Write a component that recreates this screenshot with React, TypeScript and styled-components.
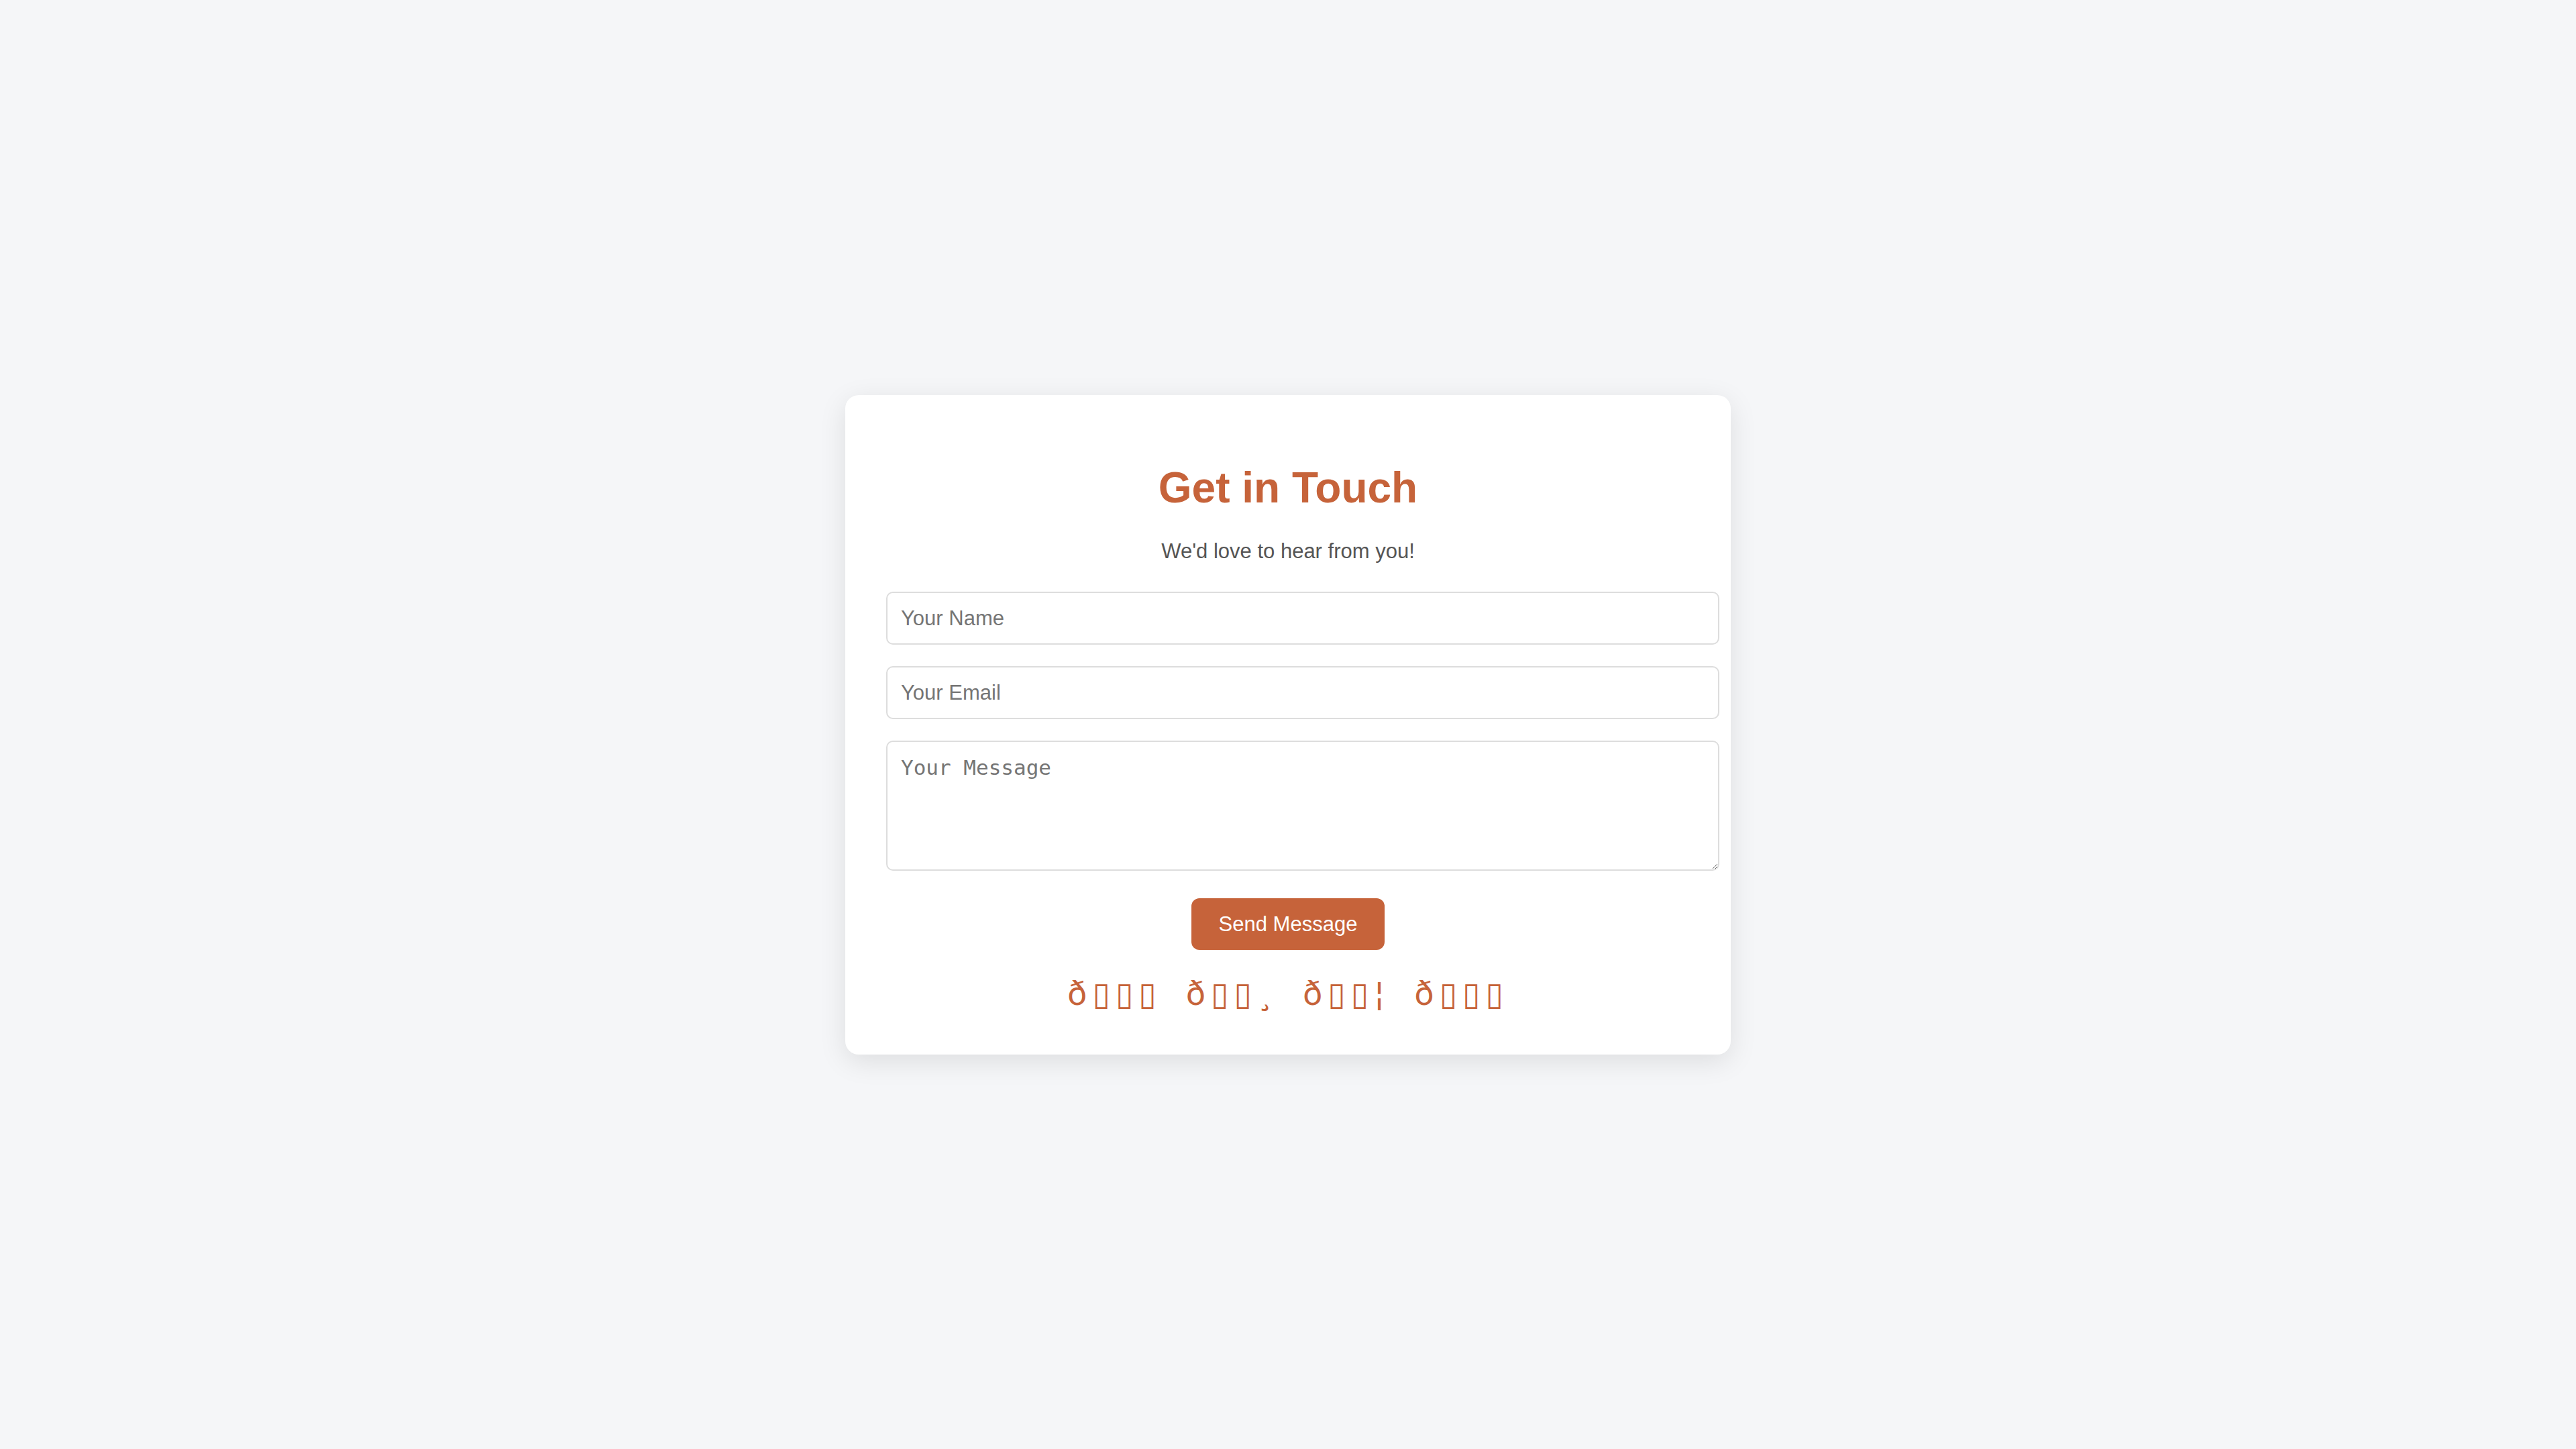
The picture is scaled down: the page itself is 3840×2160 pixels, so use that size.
import styled, { createGlobalStyle } from 'styled-components'

const GlobalStyle = createGlobalStyle`
  html,
  body {
    margin: 0;
    padding: 0;
    background: #f5f6f8;
    font-family: 'Liberation Sans', Arial, Helvetica, sans-serif;
  }
`

const Page = styled.main`
  min-height: 100vh;
  display: flex;
  align-items: center;
  justify-content: center;
`

const Card = styled.section`
  width: 1198px;
  padding: 61px 61px 63px;
  background: #ffffff;
  border-radius: 20px;
  box-shadow: 0 10px 40px rgba(0, 0, 0, 0.1);
  text-align: center;
`

const Title = styled.h2`
  margin: 40px 0 0;
  font-size: 64px;
  line-height: 74px;
  font-weight: bold;
  color: #c6633a;
`

const Subtitle = styled.p`
  margin: 40px 0 0;
  font-size: 31px;
  line-height: 36px;
  color: #555555;
`

const Form = styled.form`
  margin-top: 42px;
  display: flex;
  flex-direction: column;
  gap: 32px;
`

const Field = styled.input`
  display: block;
  width: 100%;
  height: 35px;
  box-sizing: content-box;
  padding: 20px;
  border: 2px solid #dddddd;
  border-radius: 10px;
  font-family: 'Liberation Sans', Arial, sans-serif;
  font-size: 31px;
  line-height: 35px;
  color: #333333;
  background: #ffffff;
  outline: none;

  &::placeholder {
    color: #757575;
  }
`

const MessageBox = styled.textarea`
  display: block;
  width: 100%;
  height: 150px;
  box-sizing: content-box;
  padding: 20px;
  border: 2px solid #dddddd;
  border-radius: 10px;
  font-family: 'DejaVu Sans Mono', 'Liberation Mono', monospace;
  font-size: 31px;
  line-height: 36px;
  color: #333333;
  background: #ffffff;
  outline: none;

  &::placeholder {
    color: #757575;
  }
`

const SendButton = styled.button`
  align-self: center;
  margin-top: 9px;
  padding: 21px 41px;
  border: none;
  border-radius: 12px;
  background: #c6633a;
  color: #ffffff;
  font-family: 'Liberation Sans', Arial, sans-serif;
  font-size: 31px;
  line-height: 35px;
  cursor: pointer;
`

const Socials = styled.div`
  margin-top: 37px;
  font-family: 'DejaVu Sans', sans-serif;
  font-size: 48px;
  line-height: 56px;
`

const SocialLink = styled.a`
  margin: 0 18px;
  color: #c6633a;
  text-decoration: none;
  letter-spacing: 8px;
`

// the icons were saved with the wrong encoding, so they show up as mojibake
const socials = [
  { label: 'ð▯▯▯', href: '#phone' },
  { label: 'ð▯▯¸', href: '#instagram' },
  { label: 'ð▯▯¦', href: '#twitter' },
  { label: 'ð▯▯▯', href: '#links' }
]

export default function App() {
  return (
    <>
      <GlobalStyle />
      <Page>
        <Card>
          <Title>Get in Touch</Title>
          <Subtitle>We'd love to hear from you!</Subtitle>
          <Form onSubmit={(e) => e.preventDefault()}>
            <Field type="text" placeholder="Your Name" />
            <Field type="email" placeholder="Your Email" />
            <MessageBox placeholder="Your Message" />
            <SendButton type="submit">Send Message</SendButton>
          </Form>
          <Socials>
            {socials.map((s, i) => (
              <SocialLink key={i} href={s.href}>
                {s.label}
              </SocialLink>
            ))}
          </Socials>
        </Card>
      </Page>
    </>
  )
}
